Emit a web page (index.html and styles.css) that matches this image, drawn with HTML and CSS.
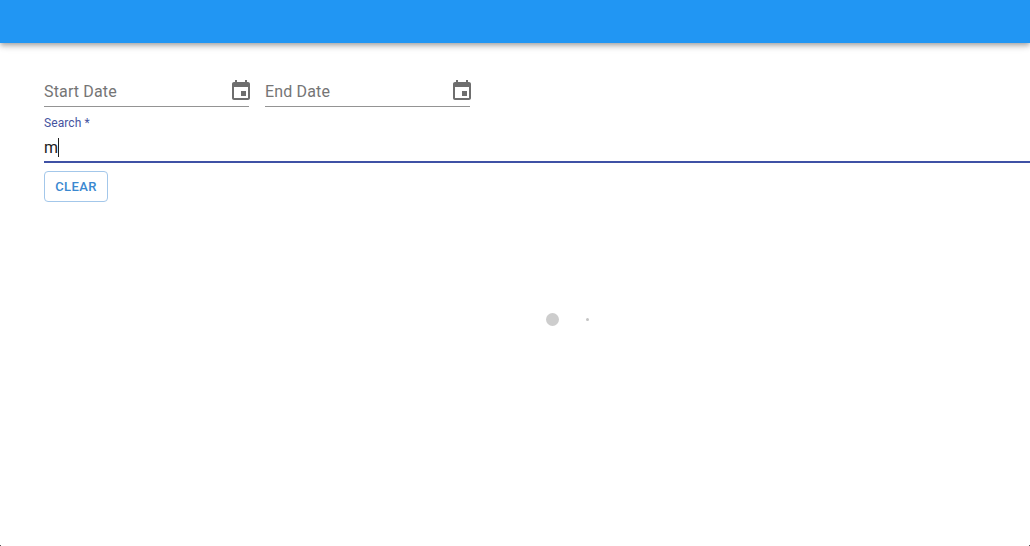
FILE: index.html
```html
<!DOCTYPE html>
<html lang="en">
<head>
<meta charset="utf-8">
<title>Search</title>
<link rel="stylesheet" href="styles.css">
</head>
<body>
<header class="app-bar"></header>
<main class="content">
  <div class="date-row">
    <div class="date-field">
      <span class="date-label">Start Date</span>
      <svg class="cal-icon" viewBox="0 0 24 24"><path d="M17 12h-5v5h5v-5zM16 1v2H8V1H6v2H5c-1.11 0-1.99.9-1.99 2L3 19c0 1.1.89 2 2 2h14c1.1 0 2-.9 2-2V5c0-1.1-.9-2-2-2h-1V1h-2zm3 18H5V8h14v11z"/></svg>
    </div>
    <div class="date-field">
      <span class="date-label">End Date</span>
      <svg class="cal-icon" viewBox="0 0 24 24"><path d="M17 12h-5v5h5v-5zM16 1v2H8V1H6v2H5c-1.11 0-1.99.9-1.99 2L3 19c0 1.1.89 2 2 2h14c1.1 0 2-.9 2-2V5c0-1.1-.9-2-2-2h-1V1h-2zm3 18H5V8h14v11z"/></svg>
    </div>
  </div>
  <div class="search-field">
    <div class="search-label">Search *</div>
    <div class="search-value"><span>m</span><i class="caret"></i></div>
  </div>
  <button class="clear-btn" type="button">CLEAR</button>
  <div class="loader"><i class="dot-big"></i><i class="dot-small"></i></div>
</main>
<i class="corner corner-left"></i>
<i class="corner corner-right"></i>
</body>
</html>
```
FILE: styles.css
```css
* { box-sizing: border-box; }
html, body { height: 100%; }
body {
  margin: 0;
  background: #fff;
  font-family: Roboto, "Liberation Sans", sans-serif;
  overflow: hidden;
  position: relative;
}
.app-bar {
  height: 43px;
  background: #2196f3;
  box-shadow: 0 2px 4px -1px rgba(0,0,0,.2), 0 4px 5px 0 rgba(0,0,0,.14), 0 1px 10px 0 rgba(0,0,0,.12);
}
.content { padding: 32px 0 0 44px; }
.date-row { display: flex; gap: 16px; }
.date-field {
  width: 205px;
  height: 32px;
  display: flex;
  align-items: center;
  justify-content: space-between;
  border-bottom: 1px solid #949494;
}
.date-label {
  font-size: 16px;
  letter-spacing: .15px;
  color: #757575;
  margin-top: 1px;
}
.cal-icon {
  width: 24px;
  height: 24px;
  fill: #6e6e6e;
  margin-right: -4px;
  margin-top: 1px;
  flex: none;
}
.search-field {
  margin-top: 9px;
  height: 47px;
  border-bottom: 2px solid #3f51a5;
}
.search-label {
  font-size: 12px;
  line-height: 14px;
  letter-spacing: .1px;
  color: #4553a0;
}
.search-value {
  display: flex;
  align-items: center;
  height: 24px;
  margin-top: 5px;
  font-size: 16px;
  color: #212121;
}
.caret {
  width: 1px;
  height: 19px;
  background: #212121;
}
.clear-btn {
  display: block;
  width: 64px;
  height: 31px;
  margin-top: 8px;
  padding: 0;
  background: #fff;
  border: 1px solid #a3c7ea;
  border-radius: 4px;
  font: 500 13px Roboto, "Liberation Sans", sans-serif;
  letter-spacing: .4px;
  color: #3a88d0;
}
.loader {
  display: flex;
  align-items: center;
  gap: 27px;
  margin: 111px 0 0 502px;
}
.dot-big {
  width: 13px;
  height: 13px;
  border-radius: 50%;
  background: #cdcdcd;
}
.dot-small {
  width: 3px;
  height: 3px;
  border-radius: 50%;
  background: #c4c4c4;
}
.corner {
  position: absolute;
  bottom: 0;
  width: 1px;
  height: 1px;
  background: #555;
}
.corner-left { left: 0; }
.corner-right { right: 0; }
```
